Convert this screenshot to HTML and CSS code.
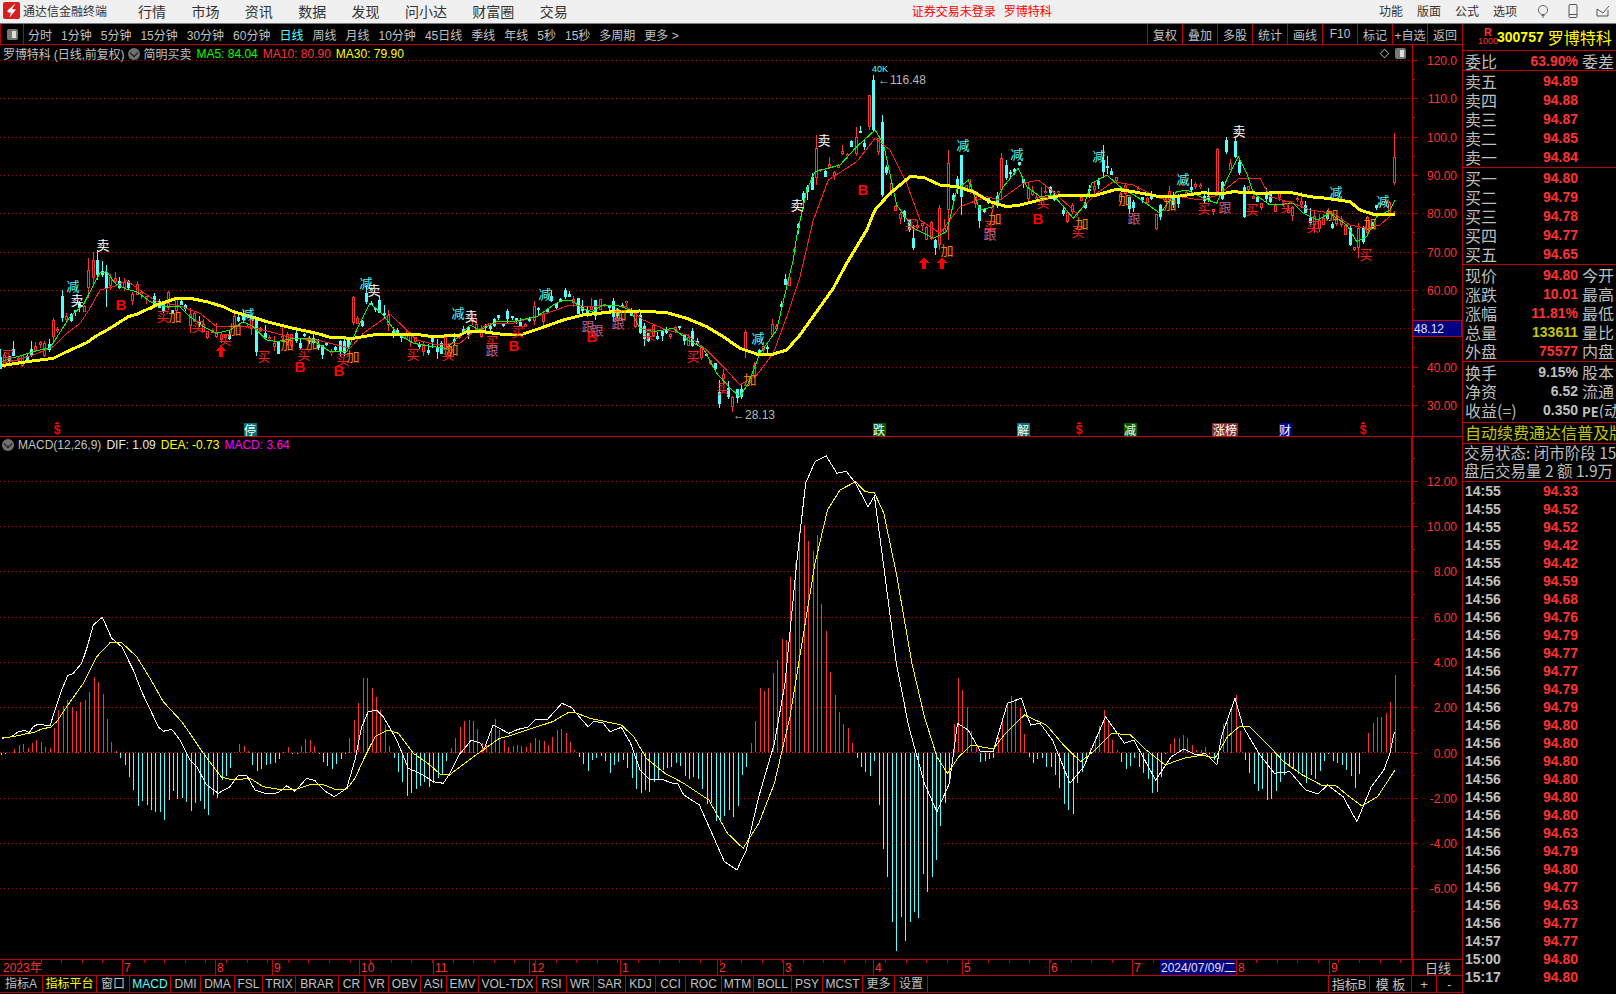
FILE: index.html
```html
<!DOCTYPE html>
<html lang="zh-CN">
<head>
<meta charset="utf-8">
<title>通达信金融终端</title>
<link rel="stylesheet" href="styles.css">
</head>
<body>
<div class="app">
  <header class="topbar">
    <svg class="logo" viewBox="0 0 17 17" width="17" height="17"><rect width="17" height="17" rx="2" fill="#d81e1e"/><path d="M12.5 1.5 L5 8 Q3.5 10 6 10.5 L8 10.8 L6.5 15.5 L13 7.5 L9 7.2 Z" fill="#fff"/></svg>
    <span class="app-title">通达信金融终端</span>
    <nav class="menu">
      <span>行情</span><span>市场</span><span>资讯</span><span>数据</span><span>发现</span><span>问小达</span><span>财富圈</span><span>交易</span>
    </nav>
    <div class="notice"><span>证券交易未登录</span><span>罗博特科</span></div>
    <nav class="tools">
      <span>功能</span><span>版面</span><span>公式</span><span>选项</span>
    </nav>
    <div class="window-icons">
      <svg viewBox="0 0 14 14" width="14" height="14"><circle cx="7" cy="6" r="4.6" fill="none" stroke="#666"/><path d="M5.5 11.5h3M6 13h2" stroke="#666" fill="none"/></svg>
      <svg viewBox="0 0 14 14" width="14" height="14"><rect x="3" y="0.5" width="8" height="13" rx="1" fill="none" stroke="#555"/><path d="M3 10.5h8" stroke="#555"/></svg>
      <svg viewBox="0 0 14 14" width="14" height="14"><path d="M1 5v7h11V6M1 5l6 4 6-7" fill="none" stroke="#555"/></svg>
    </div>
  </header>
  <div class="workspace">
    <main class="chart-col">
      <div class="toolbar">
        <div class="panel-toggle"><span class="toggle-icon"></span></div>
        <div class="periods">
          <span>分时</span><span>1分钟</span><span>5分钟</span><span>15分钟</span><span>30分钟</span><span>60分钟</span><span class="active">日线</span><span>周线</span><span>月线</span><span>10分钟</span><span>45日线</span><span>季线</span><span>年线</span><span>5秒</span><span>15秒</span><span>多周期</span><span>更多 &gt;</span>
        </div>
        <div class="actions">
          <span>复权</span><span>叠加</span><span>多股</span><span>统计</span><span>画线</span><span>F10</span><span>标记</span><span>+自选</span><span>返回</span>
        </div>
      </div>
      <section class="pane pane-price">
        <svg id="price" class="plot" width="1462" height="391" viewBox="0 45 1462 391"></svg>
        <div class="legend">
          <span class="grey title-name">罗博特科 (日线,前复权)</span>
          <i class="dot"></i>
          <span class="grey">简明买卖</span>
          <span class="green">MA5: 84.04</span>
          <span class="red">MA10: 80.90</span>
          <span class="yellow">MA30: 79.90</span>
        </div>
        <div class="pane-icons"><i class="diamond"></i><span class="toggle-icon"></span></div>
      </section>
      <section class="pane pane-macd">
        <svg id="macd" class="plot" width="1462" height="522" viewBox="0 437 1462 522"></svg>
        <div class="legend legend-macd">
          <i class="dot"></i>
          <span class="grey">MACD(12,26,9)</span>
          <span class="white">DIF: 1.09</span>
          <span class="yellow">DEA: -0.73</span>
          <span class="magenta">MACD: 3.64</span>
        </div>
      </section>
      <div class="timeaxis">
        <svg id="time" class="plot" width="1412" height="15" viewBox="0 960 1412 15"></svg>
        <span class="unit">日线</span>
      </div>
      <div class="tabs">
        <span>指标A</span><span class="yellow">指标平台</span><span>窗口</span><span class="active">MACD</span><span>DMI</span><span>DMA</span><span>FSL</span><span>TRIX</span><span>BRAR</span><span>CR</span><span>VR</span><span>OBV</span><span>ASI</span><span>EMV</span><span>VOL-TDX</span><span>RSI</span><span>WR</span><span>SAR</span><span>KDJ</span><span>CCI</span><span>ROC</span><span>MTM</span><span>BOLL</span><span>PSY</span><span>MCST</span><span>更多</span><span>设置</span><span class="spacer"></span><span>指标B</span><span>模 板</span><span>+</span><span>-</span>
      </div>
    </main>
    <aside class="side">
      <div class="quote-head">
        <div class="badge"><b>R</b><small>1000</small></div>
        <b class="code">300757</b>
        <span class="name">罗博特科</span>
      </div>
      <div class="block ratio">
        <div class="row"><span>委比</span><b class="red">63.90%</b><span>委差</span></div>
      </div>
      <div class="block book">
        <div class="row"><span>卖五</span><b class="red">94.89</b><span></span></div>
        <div class="row"><span>卖四</span><b class="red">94.88</b><span></span></div>
        <div class="row"><span>卖三</span><b class="red">94.87</b><span></span></div>
        <div class="row"><span>卖二</span><b class="red">94.85</b><span></span></div>
        <div class="row"><span>卖一</span><b class="red">94.84</b><span></span></div>
      </div>
      <div class="block book">
        <div class="row"><span>买一</span><b class="red">94.80</b><span></span></div>
        <div class="row"><span>买二</span><b class="red">94.79</b><span></span></div>
        <div class="row"><span>买三</span><b class="red">94.78</b><span></span></div>
        <div class="row"><span>买四</span><b class="red">94.77</b><span></span></div>
        <div class="row"><span>买五</span><b class="red">94.65</b><span></span></div>
      </div>
      <div class="block book">
        <div class="row"><span>现价</span><b class="red">94.80</b><span>今开</span></div>
        <div class="row"><span>涨跌</span><b class="red">10.01</b><span>最高</span></div>
        <div class="row"><span>涨幅</span><b class="red">11.81%</b><span>最低</span></div>
        <div class="row"><span>总量</span><b class="olive">133611</b><span>量比</span></div>
        <div class="row"><span>外盘</span><b class="red">75577</b><span>内盘</span></div>
      </div>
      <div class="block stats">
        <div class="row"><span>换手</span><b class="grey">9.15%</b><span>股本</span></div>
        <div class="row"><span>净资</span><b class="grey">6.52</b><span>流通</span></div>
        <div class="row"><span>收益(=)</span><b class="grey">0.350</b><span class="pe"><b>PE</b>(动</span></div>
      </div>
      <div class="block marquee">自动续费通达信普及版</div>
      <div class="block status">
        <div>交易状态: 闭市阶段 15:00</div>
        <div>盘后交易量 2 额 1.9万</div>
      </div>
      <div class="ticks" id="ticks">
        <div><b>14:55</b><b class="red">94.33</b></div>
        <div><b>14:55</b><b class="red">94.52</b></div>
        <div><b>14:55</b><b class="red">94.52</b></div>
        <div><b>14:55</b><b class="red">94.42</b></div>
        <div><b>14:55</b><b class="red">94.42</b></div>
        <div><b>14:56</b><b class="red">94.59</b></div>
        <div><b>14:56</b><b class="red">94.68</b></div>
        <div><b>14:56</b><b class="red">94.76</b></div>
        <div><b>14:56</b><b class="red">94.79</b></div>
        <div><b>14:56</b><b class="red">94.77</b></div>
        <div><b>14:56</b><b class="red">94.77</b></div>
        <div><b>14:56</b><b class="red">94.79</b></div>
        <div><b>14:56</b><b class="red">94.79</b></div>
        <div><b>14:56</b><b class="red">94.80</b></div>
        <div><b>14:56</b><b class="red">94.80</b></div>
        <div><b>14:56</b><b class="red">94.80</b></div>
        <div><b>14:56</b><b class="red">94.80</b></div>
        <div><b>14:56</b><b class="red">94.80</b></div>
        <div><b>14:56</b><b class="red">94.80</b></div>
        <div><b>14:56</b><b class="red">94.63</b></div>
        <div><b>14:56</b><b class="red">94.79</b></div>
        <div><b>14:56</b><b class="red">94.80</b></div>
        <div><b>14:56</b><b class="red">94.77</b></div>
        <div><b>14:56</b><b class="red">94.63</b></div>
        <div><b>14:56</b><b class="red">94.77</b></div>
        <div><b>14:57</b><b class="red">94.77</b></div>
        <div><b>15:00</b><b class="red">94.80</b></div>
        <div><b>15:17</b><b class="red">94.80</b></div>
      </div>
    </aside>
  </div>
</div>
<script src="chart.js"></script>
</body>
</html>
```

FILE: styles.css
```css
* { box-sizing: border-box; }
html, body { margin: 0; padding: 0; background: #000; overflow: hidden; }
body { font-family: "Liberation Sans", "Noto Sans CJK SC", sans-serif; font-size: 12px; color: #c0c0c0; }
i { font-style: normal; }
b { font-weight: 700; }
.app { width: 1616px; height: 994px; display: flex; flex-direction: column; overflow: hidden; }
.grey { color: #c0c0c0; }
.white { color: #e8e8e8; }
.green { color: #00ff00; }
.red { color: #ff3232; }
.yellow { color: #ffff00; }
.olive { color: #c4c400; }
.magenta { color: #ff00ff; }

.topbar { height: 24px; flex: none; display: flex; align-items: center; background: #f0f0f0; border-bottom: 1px solid #7a7a7a; color: #333; padding: 0 0 2px 3px; position: relative; }
.logo { flex: none; }
.app-title { margin-left: 3px; width: 115px; font-size: 12px; }
.menu { display: flex; gap: 25.4px; font-size: 14px; }
.notice { margin-left: 344px; display: flex; gap: 8px; color: #f00; font-size: 12px; width: 145px; flex: none; }
.menu span, .tools span, .notice span { white-space: nowrap; }
.tools { display: flex; gap: 14px; margin-left: auto; margin-right: 19px; font-size: 12px; }
.window-icons { display: flex; gap: 16px; margin-right: 6px; flex: none; }

.workspace { flex: 1; display: flex; min-height: 0; }
.chart-col { width: 1463px; flex: none; display: flex; flex-direction: column; border-right: 1px solid #b00000; }

.toolbar { height: 21px; flex: none; display: flex; border-bottom: 1px solid #c00000; }
.panel-toggle { width: 24px; flex: none; display: flex; align-items: center; justify-content: center; border: 1px solid #c00000; border-top: 0; border-bottom: 0; }
.toggle-icon { display: block; width: 11px; height: 11px; border-radius: 2px; background: #777; border: 2px solid #777; box-shadow: inset -4px 0 0 #ddd; }
.periods { display: flex; gap: 9px; padding-left: 4px; align-items: center; font-size: 12px; white-space: nowrap; }
.periods .active { color: #54ffff; }
.actions { margin-left: auto; display: grid; grid-template-columns: repeat(9, 35px); width: 315px; flex: none; }
.actions span { display: flex; align-items: center; justify-content: center; border-left: 1px solid #c00000; font-size: 12px; white-space: nowrap; }

.pane { position: relative; flex: none; }
.pane-price { height: 392px; border-bottom: 1px solid #c80000; }
.pane-macd { height: 522px; }
.plot { display: block; shape-rendering: crispEdges; }
.legend { position: absolute; left: 3px; top: 1px; height: 15px; display: flex; align-items: center; gap: 5px; font-size: 12px; white-space: nowrap; }
.title-name { margin-right: 0; letter-spacing: -0.1px; }
.legend .grey + .dot + .grey { margin-left: -1px; }
.legend-macd { top: 0; height: 16px; left: 3px; }
.dot { width: 12px; height: 12px; border-radius: 50%; background: #707070; position: relative; flex: none; margin: 0 -1px; }
.dot::after { content: ""; position: absolute; left: 3px; top: 2px; width: 5px; height: 5px; border-right: 1px solid #111; border-bottom: 1px solid #111; transform: rotate(45deg); }
.pane-icons { position: absolute; left: 1381px; top: 3px; display: flex; align-items: center; gap: 7px; }
.diamond { width: 7px; height: 7px; border: 1px solid #888; transform: rotate(45deg); display: block; }

.timeaxis { height: 16px; flex: none; display: flex; border-top: 1px solid #c00000; }
.unit { width: 50px; flex: none; display: flex; align-items: center; justify-content: center; font-size: 13px; border-left: 2px solid #c00000; }

.tabs { height: 18px; flex: none; display: grid; grid-template-columns: 43px 54px 33px 41px 30px 34px 28px 33px 43px 26px 24px 32px 26px 32px 58px 30px 27px 32px 30px 30px 36px 32px 38px 31px 40px 32px 33px 1fr 41px 42px 25px 25px; border-top: 1px solid #c00000; border-bottom: 1px solid #c00000; }
.tabs span { display: flex; align-items: center; justify-content: center; border-right: 1px solid #c00000; font-size: 12px; line-height: 1; white-space: nowrap; overflow: hidden; }
.tabs .active { color: #54ffff; }
.tabs .yellow { color: #ffff00; }
.tabs span:nth-last-child(-n+4), .tabs .spacer { font-size: 13px; }
.tabs span:last-child { border-right: 0; }

.side { flex: 1; min-width: 0; display: flex; flex-direction: column; overflow: hidden; }
.quote-head { height: 27px; flex: none; display: flex; align-items: center; border-bottom: 1px solid #c00000; color: #ffff00; padding-left: 16px; white-space: nowrap; }
.badge { width: 18px; display: flex; flex-direction: column; align-items: center; color: #ff3232; line-height: 9px; flex: none; }
.badge b { font-size: 11px; }
.badge small { font-size: 9px; }
.code { font-size: 14px; }
.name { font-size: 16px; margin-left: 4px; font-family: "Noto Sans CJK SC", sans-serif; line-height: 1; }
.block { flex: none; border-bottom: 1px solid #c00000; }
.ratio { height: 20px; }
.book { height: 97px; }
.stats { height: 61px; }
.row { height: 19px; display: flex; align-items: center; padding-left: 2px; white-space: nowrap; }
.row span { font-family: "Noto Sans CJK SC", sans-serif; font-size: 16px; line-height: 1; color: #bdbdbd; }
.row span:first-child { width: 40px; flex: none; }
.row span:last-child { width: 34px; margin-left: 4px; flex: none; overflow: hidden; }
.row b { flex: 1; text-align: right; font-size: 14px; }
.row .pe b { font-size: 13px; color: #c0c0c0; }
.marquee { height: 21px; padding-left: 2px; color: #c4c400; font-family: "Noto Sans CJK SC", sans-serif; font-size: 16px; line-height: 19px; white-space: nowrap; overflow: hidden; }
.status { height: 38px; padding-left: 1px; font-family: "Noto Sans CJK SC", sans-serif; font-size: 15.5px; line-height: 17px; white-space: nowrap; overflow: hidden; color: #bdbdbd; }
.status div { height: 18px; }
.ticks { flex: 1; }
.ticks div { height: 18px; display: flex; align-items: center; padding-left: 2px; font-size: 14px; color: #c0c0c0; }
.ticks b:last-child { width: 77px; text-align: right; color: #ff3232; flex: none; }
.ticks b:first-child { width: 36px; flex: none; }

/* svg chart text */
.ax { font: 12px "Liberation Sans", sans-serif; fill: #ff3232; }
.tag { font: 13px "Noto Sans CJK SC", sans-serif; text-anchor: middle; dominant-baseline: central; }
.note { font: 12px "Liberation Sans", sans-serif; fill: #b8b8b8; }
.big-b { font: 700 15px "Liberation Sans", sans-serif; fill: #f00; text-anchor: middle; dominant-baseline: central; }
.flag { font: 12px "Noto Sans CJK SC", sans-serif; fill: #fff; text-anchor: middle; dominant-baseline: central; }
.dollar { font: 700 12px "Liberation Sans", sans-serif; fill: #f00; text-anchor: middle; dominant-baseline: central; }
.mark { font: 12px "Liberation Sans", sans-serif; fill: #ff3232; }
.curr { font: 12px "Liberation Sans", sans-serif; fill: #e0e0ff; }
.kvol { font: 9px "Liberation Sans", sans-serif; fill: #54ffff; text-anchor: middle; }
```

FILE: chart.js
```javascript
(function () {
  var RED = '#ff3232', CYAN = '#54ffff', GRID = '#a00000', LINE = '#c00000';
  var PITCH = 4.41, X0 = 1.08, N = 317;

  function conv(fx, fy, flat) {
    var out = [];
    for (var i = 0; i < flat.length; i += 2) out.push([fx(flat[i]), fy(flat[i + 1])]);
    return out;
  }
  var z7 = function (f) { return conv(function (p) { return p / 3; }, function (p) { return 220 + p / 3; }, f); };
  var z8 = function (f) { return conv(function (p) { return 700 + p / 3; }, function (p) { return 50 + p / 3; }, f); };
  var z9 = function (f) { return conv(function (p) { return p / 3; }, function (p) { return 590 + p / 3; }, f); };
  var z10 = function (f) { return conv(function (p) { return 1160 + p / 3; }, function (p) { return 110 + p / 3; }, f); };
  var z11 = function (f) { return conv(function (p) { return 440 + p / 3; }, function (p) { return 260 + p / 3; }, f); };
  var z12 = function (f) { return conv(function (p) { return 440 + p / 1.6; }, function (p) { return 450 + p / 3; }, f); };
  function join() {
    var out = [];
    for (var a = 0; a < arguments.length; a++) {
      arguments[a].forEach(function (pt) {
        if (!out.length || pt[0] > out[out.length - 1][0]) out.push(pt);
      });
    }
    return out;
  }
  function at(pts, x) {
    if (x <= pts[0][0]) return pts[0][1];
    for (var i = 1; i < pts.length; i++) {
      if (x <= pts[i][0]) {
        var t = (x - pts[i - 1][0]) / (pts[i][0] - pts[i - 1][0]);
        return pts[i - 1][1] + t * (pts[i][1] - pts[i - 1][1]);
      }
    }
    return pts[pts.length - 1][1];
  }
  var seed = 20240709;
  function rnd() { seed = (seed * 1664525 + 1013904223) % 4294967296; return seed / 4294967296; }
  function poly(pts, color, w) {
    return '<polyline fill="none" stroke="' + color + '" stroke-width="' + w + '" points="' +
      pts.map(function (p) { return p[0].toFixed(1) + ',' + p[1].toFixed(1); }).join(' ') + '"/>';
  }
  function rect(x, y, w, h, fill) {
    return '<rect x="' + x + '" y="' + Math.round(y) + '" width="' + w + '" height="' + Math.max(1, Math.round(h)) + '" fill="' + fill + '"/>';
  }
  function hgrid(y) {
    return '<line x1="0" x2="1412" y1="' + (Math.round(y) + 0.5) + '" y2="' + (Math.round(y) + 0.5) + '" stroke="' + GRID + '" stroke-dasharray="1 3"/>';
  }

  /* ---- price pane ---- */
  var ma30 = join(
    z7([5,437,80,425,160,415,200,395,260,368,285,350,330,325,385,290,410,283,470,255,530,235,570,235,620,245,670,260,700,275,760,292,800,305,880,325,950,340,990,352,1060,355,1120,345,1180,342,1240,342,1300,350,1380,345]),
    z11([0,230,40,225,80,215,130,215,200,225,250,222,300,205,370,180,430,165,520,155,600,153,680,158,740,175,800,200,850,230,900,265,950,282,1000,282,1040,270,1080,225]),
    z8([400,715,440,640,500,540,525,480,570,430,630,380,670,382,720,405,770,410,820,425,870,455,920,470,960,465,1040,445,1090,435,1190,435,1250,418,1300,425,1380,440]),
    z10([0,260,60,258,130,248,180,252,220,245,300,250,390,247,450,260,500,265,570,275,600,300,640,313,705,315]));
  var ma5 = join(
    z7([5,425,30,415,60,408,100,395,150,383,165,360,210,290,250,255,275,205,300,158,320,155,345,190,380,208,410,215,450,245,500,260,540,260,570,290,610,320,650,340,690,330,730,305,760,320,800,360,830,365,880,355,930,355,990,395,1040,395,1070,330,1110,250,1150,285,1190,340,1240,370,1300,380,1340,385,1380,345]),
    z11([0,265,30,250,60,200,90,195,120,210,170,185,215,185,240,180,290,170,340,135,370,120,395,120,425,145,455,155,490,135,530,135,570,150,600,205,640,215,700,205,750,245,790,265,830,340,870,385,900,410,925,370,960,280,1010,210,1040,80,1060,0]),
    z8([260,720,290,560,320,420,345,365,420,345,470,290,525,240,550,280,590,465,640,535,700,565,740,545,770,420,805,390,840,480,880,470,910,410,955,355,980,410,1020,440,1060,435,1120,505,1150,470,1175,400,1220,375,1260,410,1310,440,1380,490]),
    z10([0,300,50,245,80,240,130,265,170,280,200,210,235,140,260,190,280,250,330,285,400,280,430,310,470,330,510,310,560,345,590,395,620,380,650,320,690,300,705,270]));
  var ma10 = join(
    z7([5,430,50,420,100,405,160,380,200,340,240,310,270,265,300,210,340,200,380,182,420,210,470,245,540,258,600,280,650,320,700,320,750,320,810,335,880,355,950,360,1010,375,1050,385,1090,340,1170,283,1210,320,1250,360,1310,375,1380,370]),
    z11([0,265,50,245,100,215,150,190,220,190,270,175,320,160,390,135,450,140,500,135,560,140,610,180,680,210,740,225,800,270,850,320,900,375,950,345,1000,280,1040,170,1080,50]),
    z8([290,715,340,510,385,390,470,335,525,265,570,300,620,400,660,510,720,550,780,470,860,440,900,450,970,400,1015,390,1060,425,1130,490,1190,430,1240,395,1300,405,1380,445]),
    z10([0,280,60,260,120,270,175,255,235,207,300,205,330,260,400,280,450,300,520,310,570,345,620,355,660,345,705,305]));

  var overrides = [
    [55,'r',318,320,337,344],[62,'c',290,296,318,322],[89,'r',258,270,288,298],[93,'r',252,260,278,285],
    [98,'c',250,260,275,280],[107,'c',265,272,288,307],[255,'c',318,318,352,356],[356,'r',296,297,323,325],
    [365,'c',285,293,302,304],[748,'r',330,332,350,358],[732,'r',396,397,407,412],[722,'c',380,392,404,408],
    [875,'c',75,80,130,132],[871,'r',95,95,127,130],[881,'c',115,122,195,197],[963,'c',155,155,197,215],
    [950,'r',150,163,210,240],[942,'r',205,208,245,250],[915,'c',225,238,248,250],
    [1220,'r',148,149,192,194],[1225,'c',137,140,152,154],[1234,'c',137,141,157,158],[1239,'c',160,162,173,175],
    [1243,'c',185,187,217,218],[1395,'r',133,157,183,185],[1360,'r',223,228,248,258],[1352,'c',226,228,245,246],
    [1103,'c',145,160,172,178],[1002,'r',153,158,190,200],[819,'c',148,152,175,180],[1007,'c',160,165,178,180],
    [816,'r',135,148,178,185]
  ];
  var price = '';
  [120,110,100,90,80,70,60,50,40,30].forEach(function (p) { price += hgrid(60 + (120 - p) * 3.833); });

  var cand = '';
  for (var i = 0; i < N; i++) {
    var x = X0 + PITCH * i, X = Math.round(x);
    var mid = at(ma5, x), amp = x > 780 ? 22 : 14;
    var c = mid + (rnd() - 0.5) * amp;
    var body = 2 + rnd() * rnd() * 17;
    var up = rnd() > 0.5;
    var top = c - body / 2, bot = c + body / 2;
    var hi = top - rnd() * rnd() * 11, lo = bot + rnd() * rnd() * 9;
    overrides.forEach(function (o) {
      if (Math.abs(o[0] - x) <= PITCH / 2) { up = o[1] === 'r'; hi = o[2]; top = o[3]; bot = o[4]; lo = o[5]; }
    });
    var col = up ? RED : CYAN;
    cand += rect(X - 1, hi, 1, lo - hi, col);
    if (up) {
      cand += rect(X - 2, top, 3, bot - top, RED);
      if (bot - top > 2) cand += rect(X - 1, top + 1, 1, bot - top - 2, '#000');
    } else {
      cand += rect(X - 2, top, 3, bot - top, CYAN);
    }
  }
  price += cand;
  price += poly(ma10, '#ff1e1e', 1) + poly(ma5, '#00ff00', 1) + poly(ma30, '#ffff00', 3);

  function tags(list, text, color) {
    var s = '';
    list.forEach(function (p) { s += '<text class="tag" x="' + p[0] + '" y="' + p[1] + '" fill="' + color + '">' + text + '</text>'; });
    return s;
  }
  price += tags([[163,315],[198,325],[225,338],[264,355],[304,353],[343,358],[413,353],[448,353],[518,330],[649,333],[693,355],[723,387],[492,340],[911,223],[1043,201],[1078,230],[990,225],[1204,207],[1252,208],[1287,205],[1313,225],[1366,253],[8,354]], '买', '#ff1e1e');
  price += tags([[175,315],[235,328],[287,343],[312,342],[353,355],[452,348],[620,313],[750,378],[947,249],[995,217],[1082,222],[1125,198],[1170,203],[1332,213],[1370,222]], '加', '#ff8000');
  price += tags([[492,349],[588,325],[597,329],[618,322],[990,233],[1134,217],[1225,206]], '跟', '#c0608f');
  price += tags([[73,285],[366,282],[248,313],[458,312],[545,293],[758,337],[963,144],[1017,153],[1099,155],[1183,178],[1336,191],[1383,200]], '减', '#54ffff');
  price += tags([[103,244],[77,299],[374,289],[471,315],[824,139],[797,204],[1239,130]], '卖', '#ffffff');
  [[121,304],[300,366],[339,370],[514,345],[592,336],[863,189],[1038,218]].forEach(function (p) {
    price += '<text class="big-b" x="' + p[0] + '" y="' + p[1] + '">B</text>';
  });
  [[221,351],[924,263],[942,263]].forEach(function (p) {
    price += '<path fill="#ff0000" d="M' + p[0] + ' ' + (p[1] - 6) + 'l5 6h-3v6h-4v-6h-3z"/>';
  });
  price += '<text class="note" x="878" y="84">←116.48</text><text class="note" x="733" y="419">←28.13</text>';
  price += '<text class="kvol" x="880" y="72">40K</text>';

  function flag(x, w, text, bg) {
    return '<rect x="' + (x - w / 2) + '" y="423" width="' + w + '" height="13" fill="' + bg + '"/><text class="flag" x="' + x + '" y="429">' + text + '</text>';
  }
  price += flag(250, 13, '停', '#007878') + flag(879, 13, '跌', '#006000') + flag(1023, 13, '解', '#007878') +
    flag(1130, 13, '减', '#006000') + flag(1225, 26, '涨榜', '#803030') + flag(1285, 13, '财', '#0000a0');
  [57, 1079, 1363].forEach(function (x) {
    price += '<text class="dollar" x="' + x + '" y="430">$</text><path fill="#f00" d="M' + x + ' 422l3 2h-6z"/>';
  });

  function axisLabels(fn, labels) {
    var s = '';
    labels.forEach(function (l) {
      var y = Math.round(fn(l[0]));
      s += rect(1412, y, 6, 1, LINE) + '<text class="ax" x="1457" y="' + (y + 5) + '" text-anchor="end">' + l[1] + '</text>';
    });
    return s;
  }
  price += '<rect x="1412" y="45" width="1" height="391" fill="' + LINE + '"/>';
  price += axisLabels(function (p) { return 60 + (120 - p) * 3.833; }, [[120,'120.0'],[110,'110.0'],[100,'100.0'],[90,'90.00'],[80,'80.00'],[70,'70.00'],[60,'60.00'],[40,'40.00'],[30,'30.00']]);
  for (var t = 115; t > 25; t -= 10) price += rect(1412, 60 + (120 - t) * 3.833, 3, 1, LINE);
  price += '<rect x="1412.5" y="320.5" width="49" height="16" fill="#000080" stroke="' + LINE + '"/><text class="curr" x="1414" y="333">48.12</text>';
  document.getElementById('price').innerHTML = price;

  /* ---- MACD pane ---- */
  var dif = join(
    z9([5,445,35,440,55,425,75,421,88,428,100,410,115,402,150,408,165,360,185,300,203,257,220,250,245,220,262,170,280,105,307,82,335,145,365,170,400,240,425,305,475,410,490,424,515,418,540,450,570,510,590,530,620,585,655,610,690,590,715,556,740,556,765,600,800,612,835,608,860,587,885,604,920,565,945,572,975,603,1003,620,1040,595,1065,510,1085,410,1105,365,1130,360,1150,380,1190,450,1225,535,1260,550,1300,575,1330,580,1350,550,1380,490]),
    z12([35,905,50,870,65,880,70,900,85,825,110,850,125,838,140,832,152,810,172,808,195,760,210,772,225,805,237,830,245,815,260,817,272,845,290,832,305,880,320,960,335,988,358,990,372,1000,380,1000,390,1035,415,1065,435,1150,455,1235,475,1260,490,1200,510,1040,535,880,552,700,570,350,585,100,600,35,618,18,635,70,650,64,665,100,685,170,695,138,710,350,730,640,750,830,775,1000,795,1085,815,1000,828,820,845,840,865,905,885,905,908,760,930,745,945,825,960,820,980,870,1008,1000,1030,950,1065,800,1095,880,1110,870,1145,990,1170,920,1190,897,1210,915,1225,910,1243,945,1250,860,1272,745,1285,830,1310,910,1335,970,1360,965,1385,1020,1405,1032,1420,1005,1445,1040,1467,1115,1490,1010,1510,960,1520,910,1527,845]));
  var dea = join(
    z9([5,443,40,440,75,432,100,428,130,415,150,413,170,395,200,350,250,280,290,200,330,158,365,158,410,200,450,265,490,335,545,395,580,445,610,490,640,530,665,562,700,570,750,565,790,590,830,597,890,597,935,582,965,582,1005,598,1040,597,1065,565,1090,510,1125,440,1165,420,1195,430,1240,490,1290,525,1320,552]),
    z12([15,975,50,925,95,865,110,858,180,815,205,788,215,787,240,805,290,825,310,860,330,925,360,970,390,1000,430,1050,460,1150,485,1195,510,1120,535,1000,560,800,600,340,620,180,640,120,665,95,680,125,695,128,710,190,730,370,755,640,775,800,795,920,812,970,830,920,850,885,885,897,905,850,935,795,970,825,1000,890,1025,935,1045,905,1075,850,1105,855,1130,900,1160,945,1190,925,1220,915,1240,925,1260,860,1280,828,1295,830,1320,875,1350,935,1380,975,1410,1005,1432,1005,1455,1040,1475,1068,1500,1040,1528,960]));

  var macd = '', ZERO = 752.5, STEP = 22.65;
  [12,10,8,6,4,2,-2,-4,-6].forEach(function (v) { macd += hgrid(ZERO - v * STEP); });
  for (i = 0; i < N; i++) {
    x = X0 + PITCH * i;
    X = Math.round(x);
    var v = 2 * (at(dea, x) - at(dif, x));
    v *= (i > 310 ? 1 : 0.88 + rnd() * 0.3);
    if (v > 236) v = 236 - rnd() * 30;
    if (Math.abs(v) < 0.6) continue;
    macd += v > 0 ? rect(X, ZERO - v, 1, v, RED) : rect(X, ZERO, 1, -v, CYAN);
  }
  macd += '<line x1="0" x2="1412" y1="752.5" y2="752.5" stroke="#ff0000" stroke-dasharray="1 2"/>';
  macd += poly(dif, '#ffffff', 1) + poly(dea, '#ffff00', 1);
  macd += '<rect x="1411" y="437" width="2" height="522" fill="' + LINE + '"/>';
  macd += axisLabels(function (v) { return ZERO - v * STEP; }, [[12,'12.00'],[10,'10.00'],[8,'8.00'],[6,'6.00'],[4,'4.00'],[2,'2.00'],[0,'0.00'],[-2,'-2.00'],[-4,'-4.00'],[-6,'-6.00']]);
  for (t = 13; t > -8; t -= 2) macd += rect(1412, ZERO - t * STEP, 3, 1, LINE);
  document.getElementById('macd').innerHTML = macd;

  /* ---- time axis ---- */
  var time = '';
  for (var tx = 20; tx < 1412; tx += 20.6) time += rect(Math.round(tx), 960, 1, 3, LINE);
  [[2,'2023年'],[123,'7'],[216,'8'],[273,'9'],[360,'10'],[434,'11'],[530,'12'],[621,'1'],[718,'2'],[784,'3'],[874,'4'],[963,'5'],[1050,'6'],[1133,'7'],[1237,'8'],[1330,'9']].forEach(function (m) {
    if (m[0] > 2) time += rect(m[0] - 1, 960, 1, 15, LINE);
    time += '<text class="mark" x="' + (m[0] + 1) + '" y="972">' + m[1] + '</text>';
  });
  time += '<rect x="1160" y="960" width="76" height="15" fill="#000080"/><text class="curr" x="1161" y="972">2024/07/09/二</text>';
  document.getElementById('time').innerHTML = time;
})();
```
